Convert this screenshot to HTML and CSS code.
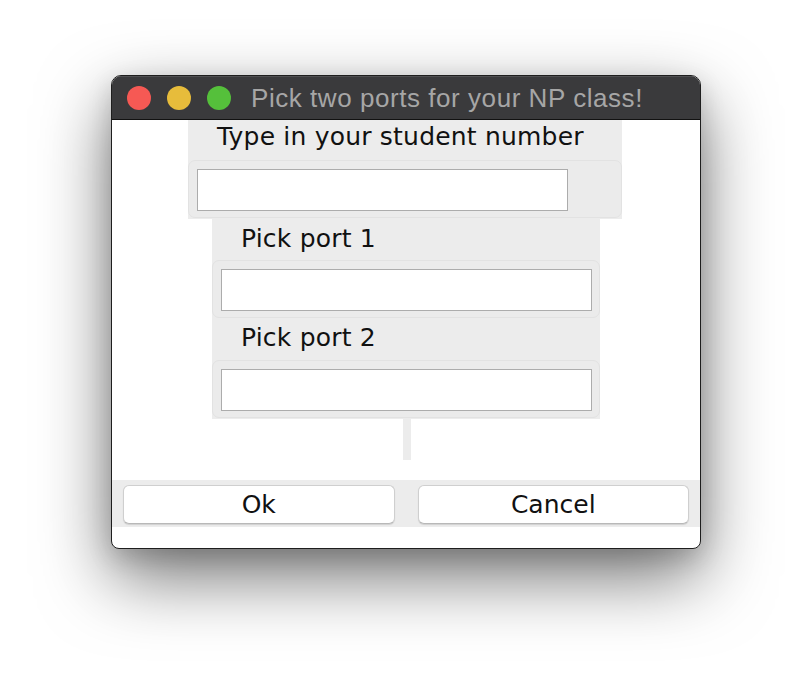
FILE: index.html
```html
<!DOCTYPE html>
<html>
<head>
<meta charset="utf-8">
<link rel="stylesheet" href="styles.css">
</head>
<body>
<div class="window">
  <div class="titlebar">
    <span class="light red"></span>
    <span class="light yellow"></span>
    <span class="light green"></span>
    <span class="title">Pick two ports for your NP class!</span>
  </div>
  <div class="content">
    <div class="panel panel-wide">
      <div class="label label-first">Type in your student number</div>
      <div class="box"><div class="entry"></div></div>
    </div>
    <div class="panel panel-narrow">
      <div class="label label-a">Pick port 1</div>
      <div class="box"><div class="entry"></div></div>
      <div class="label label-b">Pick port 2</div>
      <div class="box"><div class="entry"></div></div>
    </div>
    <div class="strip"></div>
    <div class="spacer"></div>
    <div class="buttonbar">
      <div class="button">Ok</div>
      <div class="button">Cancel</div>
    </div>
  </div>
</div>
</body>
</html>
```
FILE: styles.css
```css
html, body {
  margin: 0;
  padding: 0;
  background: #ffffff;
}
body {
  width: 812px;
  height: 696px;
  overflow: hidden;
  font-family: "DejaVu Sans", sans-serif;
}
.window {
  box-sizing: border-box;
  margin: 75px 0 0 111px;
  width: 590px;
  height: 474px;
  border: 1px solid #1e1e1e;
  border-radius: 10px 10px 8px 8px;
  background: #ffffff;
  overflow: hidden;
  box-shadow: 0 28px 70px rgba(0, 0, 0, 0.55), 0 8px 24px rgba(0,0,0,0.15);
  display: flex;
  flex-direction: column;
}
.titlebar {
  box-sizing: border-box;
  height: 44px;
  flex: 0 0 44px;
  background: #3a3a3c;
  border-top: 1px solid #505052;
  border-bottom: 1px solid #111;
  display: flex;
  align-items: center;
  padding-left: 15px;
}
.light {
  width: 24px;
  height: 24px;
  border-radius: 50%;
  margin-right: 16px;
  flex: 0 0 24px;
}
.red { background: #f65954; }
.yellow { background: #e7bc3b; }
.green { background: #55c03b; margin-right: 20px; }
.title {
  font-family: "Liberation Sans", Arial, sans-serif;
  font-size: 26px;
  letter-spacing: 0.55px;
  color: #a6a6a6;
  line-height: 30px;
}
.content {
  flex: 1;
  display: flex;
  flex-direction: column;
  align-items: center;
}
.panel {
  background: #ececec;
  display: flex;
  flex-direction: column;
  padding-bottom: 1px;
}
.panel-wide { width: 434px; margin-left: -2px; }
.panel-narrow { width: 388px; }
.label {
  box-sizing: border-box;
  font-size: 25px;
  line-height: 33px;
  color: #111;
  padding-left: 29px;
  white-space: nowrap;
  letter-spacing: 0.2px;
}
.label-first { height: 40px; padding-top: 0; }
.label-a { height: 41px; padding-top: 3px; }
.label-b { height: 42px; padding-top: 3px; }
.box {
  box-sizing: border-box;
  height: 58px;
  border: 1px solid #e2e2e2;
  border-radius: 7px;
  background: #ebebeb;
  padding: 8px 0 0 8px;
}
.entry {
  box-sizing: border-box;
  width: 371px;
  height: 42px;
  background: #ffffff;
  border: 1px solid #acacac;
}
.strip {
  width: 8px;
  height: 41px;
  background: #ececec;
  margin-left: 1px;
}
.spacer {
  height: 20px;
}
.buttonbar {
  box-sizing: border-box;
  align-self: stretch;
  height: 47px;
  background: #ececec;
  display: flex;
  gap: 23px;
  padding: 5px 11px 0 11px;
}
.button {
  box-sizing: border-box;
  flex: 1;
  height: 39px;
  background: #ffffff;
  border: 1px solid #cfcfcf;
  border-bottom-color: #b8b8b8;
  border-radius: 6px;
  box-shadow: 0 1px 1px rgba(0, 0, 0, 0.12);
  font-size: 25px;
  line-height: 37px;
  text-align: center;
  color: #111;
}
```
